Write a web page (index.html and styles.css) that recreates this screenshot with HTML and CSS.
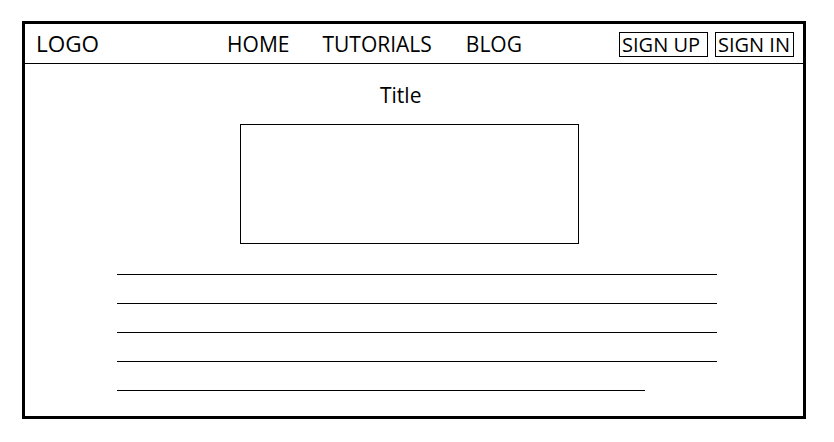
FILE: index.html
```html
<!DOCTYPE html>
<html>
<head>
<meta charset="utf-8">
<link rel="stylesheet" href="styles.css">
</head>
<body>
<div class="frame">
  <header class="header">
    <div class="logo">LOGO</div>
    <nav class="nav">
      <span class="nav-item">HOME</span>
      <span class="nav-item">TUTORIALS</span>
      <span class="nav-item">BLOG</span>
    </nav>
    <div class="auth">
      <span class="btn btn-up">SIGN UP</span>
      <span class="btn btn-in">SIGN IN</span>
    </div>
  </header>
  <main class="content">
    <div class="title">Title</div>
    <div class="image-box"></div>
    <div class="lines">
      <div class="line"></div>
      <div class="line"></div>
      <div class="line"></div>
      <div class="line"></div>
      <div class="line line-short"></div>
    </div>
  </main>
</div>
</body>
</html>
```

FILE: styles.css
```css
* { box-sizing: border-box; }
html, body { margin: 0; padding: 0; background: #fff; }
body {
  font-family: "Open Sans", "Noto Sans", sans-serif;
  color: #000;
}
.frame {
  margin: 21px 0 0 22px;
  width: 784px;
  height: 398px;
  border: 3px solid #000;
}
.header {
  height: 40px;
  border-bottom: 1px solid #000;
  display: flex;
  align-items: center;
  padding: 2px 9px 0 11px;
}
.logo {
  font-size: 22.5px;
  line-height: 1;
}
.nav {
  display: flex;
  margin-left: 128px;
  font-size: 21px;
  line-height: 1;
}
.nav-item { margin-right: 33px; }
.nav-item:nth-child(2) { margin-right: 34px; }
.auth {
  margin-left: auto;
  display: flex;
  gap: 7px;
}
.btn {
  border: 1px solid #000;
  height: 25px;
  font-size: 20px;
  line-height: 23px;
  padding: 0 3px 0 2px;
}
.btn-up { padding-right: 7px; }
.content {
  display: flex;
  flex-direction: column;
  align-items: flex-start;
}
.title {
  margin: 19px 0 0 355px;
  font-size: 21px;
  line-height: 24px;
}
.image-box {
  margin: 17px 0 0 215px;
  width: 339px;
  height: 120px;
  border: 1px solid #000;
}
.lines {
  margin: 30px 0 0 92px;
  display: flex;
  flex-direction: column;
  gap: 28px;
}
.line {
  width: 600px;
  border-top: 1px solid #000;
}
.line-short { width: 528px; }
```
